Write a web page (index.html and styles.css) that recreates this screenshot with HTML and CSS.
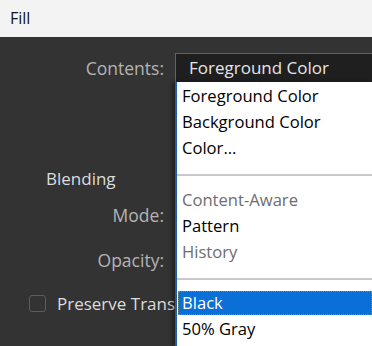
FILE: index.html
```html
<!DOCTYPE html>
<html>
<head>
<meta charset="utf-8">
<link rel="stylesheet" href="styles.css">
</head>
<body>
<div class="window">
  <div class="titlebar">Fill</div>
  <div class="panel">
    <div class="row contents-row">
      <div class="label">Contents:</div>
      <div class="select">Foreground Color</div>
    </div>
    <div class="heading">Blending</div>
    <div class="row mode-row">
      <div class="label">Mode:</div>
    </div>
    <div class="row opacity-row">
      <div class="label">Opacity:</div>
    </div>
    <div class="check-row">
      <span class="checkbox"></span>
      <span class="check-label">Preserve Transparency</span>
    </div>
    <ul class="dropdown">
      <li class="item">Foreground Color</li>
      <li class="item">Background Color</li>
      <li class="item">Color...</li>
      <li class="sep"></li>
      <li class="item disabled">Content-Aware</li>
      <li class="item">Pattern</li>
      <li class="item disabled">History</li>
      <li class="sep"></li>
      <li class="item selected">Black</li>
      <li class="item">50% Gray</li>
    </ul>
  </div>
</div>
</body>
</html>
```

FILE: styles.css
```css
html, body {
  margin: 0;
  padding: 0;
}
body {
  width: 372px;
  height: 346px;
  overflow: hidden;
  font-family: "Open Sans", "Noto Sans", sans-serif;
  background: #333333;
}
.window {
  display: flex;
  flex-direction: column;
  height: 346px;
}
.titlebar {
  height: 37px;
  background: #f3f3f3;
  color: #111;
  font-size: 16px;
  line-height: 36px;
  padding-left: 10px;
  box-sizing: border-box;
}
.panel {
  position: relative;
  flex: 1;
  background: #333333;
  padding-top: 16px;
  display: flex;
  flex-direction: column;
}
.row {
  display: flex;
  align-items: center;
  gap: 11px;
}
.label {
  width: 164px;
  text-align: right;
  color: #b4b4b4;
  font-size: 17.5px;
  flex: none;
}
.select {
  flex: 1;
  height: 30px;
  box-sizing: border-box;
  background: #1f1f1f;
  border: 1px solid #2e6cb4;
  border-right: none;
  color: #e6e6e6;
  font-size: 17px;
  line-height: 28px;
  padding-left: 13px;
}
.heading {
  margin-top: 85px;
  padding-left: 46px;
  color: #dcdcdc;
  font-size: 17px;
  line-height: 22px;
}
.mode-row {
  margin-top: 14px;
  height: 22px;
}
.opacity-row {
  margin-top: 23px;
  height: 22px;
}
.check-row {
  margin-top: 21px;
  display: flex;
  align-items: center;
  padding-left: 29px;
  gap: 11px;
  height: 22px;
}
.checkbox {
  width: 15px;
  height: 15px;
  border: 1px solid #5c5c5c;
  border-radius: 3px;
  flex: none;
}
.check-label {
  color: #dcdcdc;
  font-size: 17px;
  white-space: nowrap;
  width: 118px;
  overflow: hidden;
}
.dropdown {
  position: absolute;
  left: 175px;
  top: 45px;
  right: 0;
  bottom: 0;
  margin: 0;
  padding: 1px 0 0 0;
  list-style: none;
  background: #ffffff;
  border-left: 2px solid #1c5fae;
  box-shadow: -3px 0 4px rgba(0,0,0,0.35);
}
.item {
  height: 26px;
  line-height: 26px;
  padding-left: 5px;
  font-size: 16.6px;
  color: #000;
  white-space: nowrap;
}
.item.disabled {
  color: #6d6d6d;
}
.sep {
  height: 2px;
  background: #c8c8c8;
  margin: 13px 0 11px 0;
}
.item.selected {
  height: 24px;
  line-height: 24px;
  margin: 1px 0 1px 0;
  background: #0a6fd6;
  color: #fff;
  outline: 1px dotted #7a8a6a;
  outline-offset: -1px;
  padding-left: 4px;
  margin-left: 1px;
}
```
